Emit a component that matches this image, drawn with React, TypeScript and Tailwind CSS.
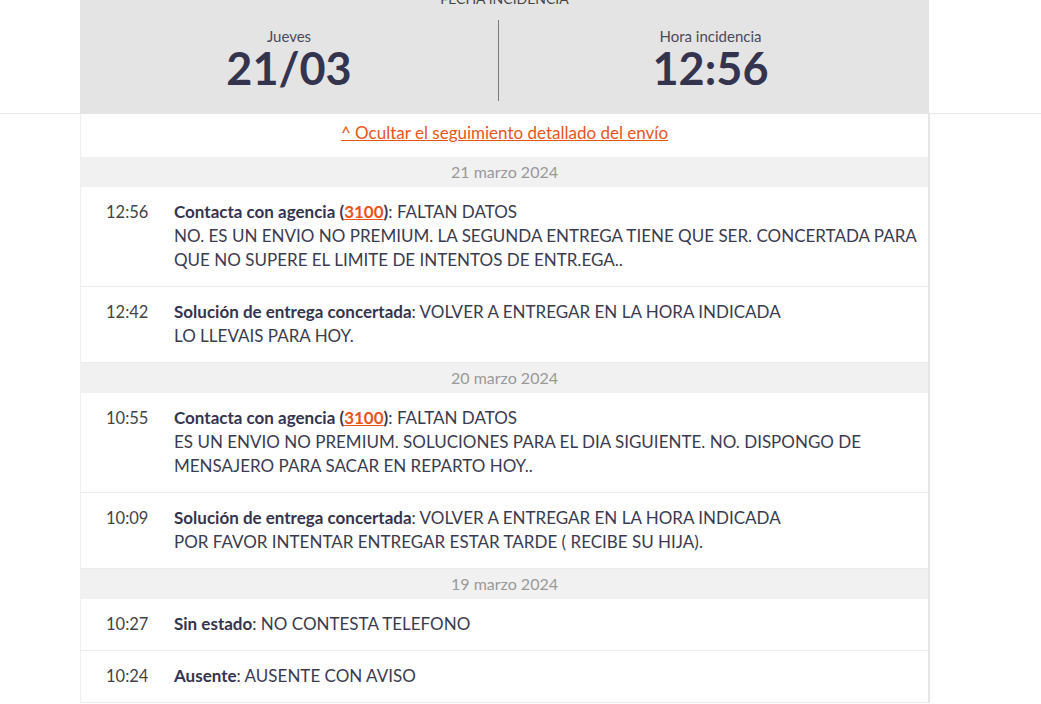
import React from "react";

type Entry = {
  time: string;
  label: string;
  agency?: string;
  text: string;
  lines?: string[];
};

type Day = {
  date: string;
  entries: Entry[];
};

const days: Day[] = [
  {
    date: "21 marzo 2024",
    entries: [
      {
        time: "12:56",
        label: "Contacta con agencia",
        agency: "3100",
        text: "FALTAN DATOS",
        lines: [
          "NO. ES UN ENVIO NO PREMIUM. LA SEGUNDA ENTREGA TIENE QUE SER. CONCERTADA PARA",
          "QUE NO SUPERE EL LIMITE DE INTENTOS DE ENTR.EGA..",
        ],
      },
      {
        time: "12:42",
        label: "Solución de entrega concertada",
        text: "VOLVER A ENTREGAR EN LA HORA INDICADA",
        lines: ["LO LLEVAIS PARA HOY."],
      },
    ],
  },
  {
    date: "20 marzo 2024",
    entries: [
      {
        time: "10:55",
        label: "Contacta con agencia",
        agency: "3100",
        text: "FALTAN DATOS",
        lines: [
          "ES UN ENVIO NO PREMIUM. SOLUCIONES PARA EL DIA SIGUIENTE. NO. DISPONGO DE",
          "MENSAJERO PARA SACAR EN REPARTO HOY..",
        ],
      },
      {
        time: "10:09",
        label: "Solución de entrega concertada",
        text: "VOLVER A ENTREGAR EN LA HORA INDICADA",
        lines: ["POR FAVOR INTENTAR ENTREGAR ESTAR TARDE ( RECIBE SU HIJA)."],
      },
    ],
  },
  {
    date: "19 marzo 2024",
    entries: [
      { time: "10:27", label: "Sin estado", text: "NO CONTESTA TELEFONO" },
      { time: "10:24", label: "Ausente", text: "AUSENTE CON AVISO" },
    ],
  },
];

function Row({ entry }: { entry: Entry }) {
  return (
    <div className="flex border-b border-[#ececec] pl-[25px] pt-[13px] pb-[14px] leading-[24px] text-[#3b3b4f]">
      <div className="w-[68px] shrink-0 text-[16.5px] text-[#444]">{entry.time}</div>
      <div className="flex-1 text-[17px]">
        <div>
          <span className="font-bold text-[#35344f]">
            {entry.label}
            {entry.agency && (
              <>
                {" ("}
                <a href="#" className="text-[#e8551c] underline">
                  {entry.agency}
                </a>
                {")"}
              </>
            )}
          </span>
          : {entry.text}
        </div>
        {entry.lines?.map((l, i) => (
          <div key={i} className="whitespace-nowrap">
            {l}
          </div>
        ))}
      </div>
    </div>
  );
}

export default function App() {
  return (
    <div className="min-h-screen bg-white font-['Lato','Liberation_Sans',sans-serif] text-[#3b3b4f]">
      {/* Cabecera incidencia */}
      <div className="border-b border-[#e6e6e6]">
        <div className="ml-[80px] flex h-[113px] w-[849px] flex-col bg-[#e4e4e4]">
          <div className="-mt-[10px] text-center text-[14px] uppercase leading-[17px] text-[#444]">
            Fecha incidencia
          </div>
          <div className="mt-[13px] flex h-[81px]">
            <div className="flex w-[418px] flex-col items-center pt-[7px]">
              <div className="text-[15px] leading-[19px] text-[#4a4a5a]">Jueves</div>
              <div className="mt-[2px] text-[45px] font-bold leading-[40px] text-[#35344f]">
                21/03
              </div>
            </div>
            <div className="w-px bg-[#7a7a7a]" />
            <div className="flex flex-1 flex-col items-center pt-[7px] pr-[7px]">
              <div className="text-[15px] leading-[19px] text-[#4a4a5a]">Hora incidencia</div>
              <div className="mt-[2px] text-[45px] font-bold leading-[40px] text-[#35344f]">
                12:56
              </div>
            </div>
          </div>
        </div>
      </div>

      {/* Seguimiento */}
      <div className="ml-[80px] w-[850px] border-l border-r-2 border-l-[#f0f0f0] border-r-[#e6e6e6]">
        <div className="flex h-[43px] items-center justify-center pb-[5px]">
          <a href="#" className="text-[17px] text-[#e8551c] underline">
            ^ Ocultar el seguimiento detallado del envío
          </a>
        </div>
        {days.map((d) => (
          <div key={d.date}>
            <div className="flex h-[30px] items-center justify-center bg-[#f1f1f1] text-[16px] text-[#999]">
              {d.date}
            </div>
            {d.entries.map((e) => (
              <Row key={e.time} entry={e} />
            ))}
          </div>
        ))}
      </div>
    </div>
  );
}
